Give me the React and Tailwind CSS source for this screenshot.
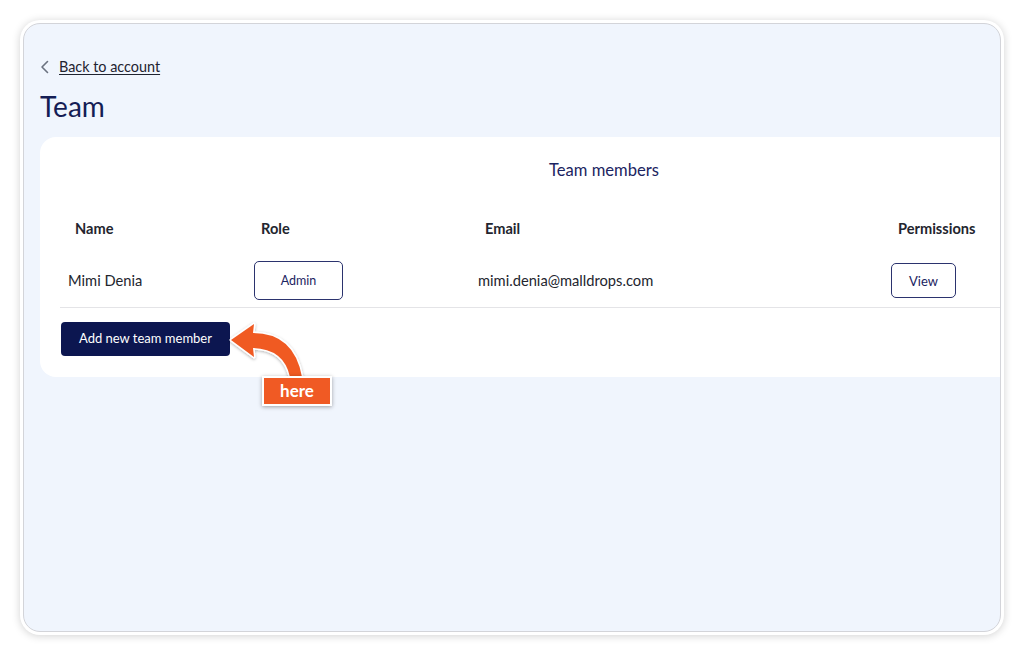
import React from "react";

const members = [
  { id: 1, name: "Mimi Denia", role: "Admin", email: "mimi.denia@malldrops.com" },
];

const HereArrow = () => (
  <svg
    className="absolute left-0 top-0 pointer-events-none"
    width="1024"
    height="654"
    viewBox="0 0 1024 654"
  >
    <defs>
      <filter id="shade" x="-20%" y="-20%" width="140%" height="140%">
        <feDropShadow dx="0" dy="1" stdDeviation="1.5" floodColor="#000" floodOpacity="0.3" />
      </filter>
    </defs>
    <path
      d="M231 340 L254 324 L253 333 Q294 333 302 377 L290 377 Q284 349 253 348 L254 357 Z"
      fill="#f05a24"
      stroke="#ffffff"
      strokeWidth="3"
      strokeLinejoin="round"
      paintOrder="stroke"
      filter="url(#shade)"
    />
  </svg>
);

export default function App() {
  return (
    <div
      className="relative w-[1024px] h-[654px] bg-white pt-5 pl-5"
      style={{ fontFamily: "Lato, 'Noto Sans', sans-serif" }}
    >
      {/* Frame */}
      <div className="w-[984px] h-[615px] rounded-[20px] bg-white p-[3px] shadow-[0_1px_8px_rgba(0,0,0,0.18)]">
        <div className="h-full rounded-[17px] border border-[#d3d4d9] bg-[#f0f5fd] overflow-hidden pl-4 pt-[33px]">
          {/* Back link */}
          <div className="flex items-center gap-2.5 h-5">
            <svg width="10" height="14" viewBox="0 0 10 14" fill="none">
              <path d="M7.5 1.5 L2 7 L7.5 12.5" stroke="#6b7280" strokeWidth="1.6" strokeLinecap="round" strokeLinejoin="round" />
            </svg>
            <span className="-ml-px text-[14.4px] text-[#1f2330] underline underline-offset-2">Back to account</span>
          </div>

          <h1 className="mt-[13px] text-[28px] leading-8 text-[#141d55]">Team</h1>

          {/* Card */}
          <div className="mt-[15px] w-[1128px] shrink-0 rounded-2xl bg-white pt-[21px] pb-[21px] px-5">
            <div className="text-center text-[16.6px] leading-6 text-[#1b2461]">Team members</div>

            {/* Header */}
            <div className="mt-[37px] grid grid-cols-[186px_224px_413px_1fr] text-[14.6px] leading-5 font-bold text-[#23252e]">
              <div className="pl-[15px]">Name</div>
              <div className="pl-[15px]">Role</div>
              <div className="pl-[15px]">Email</div>
              <div className="pl-[15px]">Permissions</div>
            </div>

            {/* Rows */}
            {members.map((m) => (
              <div
                key={m.id}
                className="mt-[14px] grid grid-cols-[186px_224px_413px_1fr] items-center h-[55px] border-b border-[#e4e4e7] text-[14.7px] text-[#23252e] pt-px"
              >
                <div className="pl-2">{m.name}</div>
                <div className="pl-2">
                  <button className="w-[89px] h-[39px] rounded-[5px] border border-[#2b336e] text-[12.5px] leading-4 text-[#1b2461]">
                    {m.role}
                  </button>
                </div>
                <div className="pl-2">{m.email}</div>
                <div className="pl-2">
                  <button className="w-[65px] h-[35px] rounded-[5px] border border-[#2b336e] text-[13px] leading-4 text-[#1b2461]">
                    View
                  </button>
                </div>
              </div>
            ))}

            <button className="mt-[14px] ml-px w-[169px] h-[34px] rounded-[4px] bg-[#0c1650] text-[13px] text-white">
              Add new team member
            </button>
          </div>
        </div>
      </div>

      {/* Annotation */}
      <HereArrow />
      <div className="absolute left-[262px] top-[376px] w-[70px] h-[30px] flex items-center justify-center bg-[#f05a24] border-2 border-white shadow-[0_1px_4px_rgba(0,0,0,0.35)] text-[17px] font-bold text-white">
        here
      </div>
    </div>
  );
}
